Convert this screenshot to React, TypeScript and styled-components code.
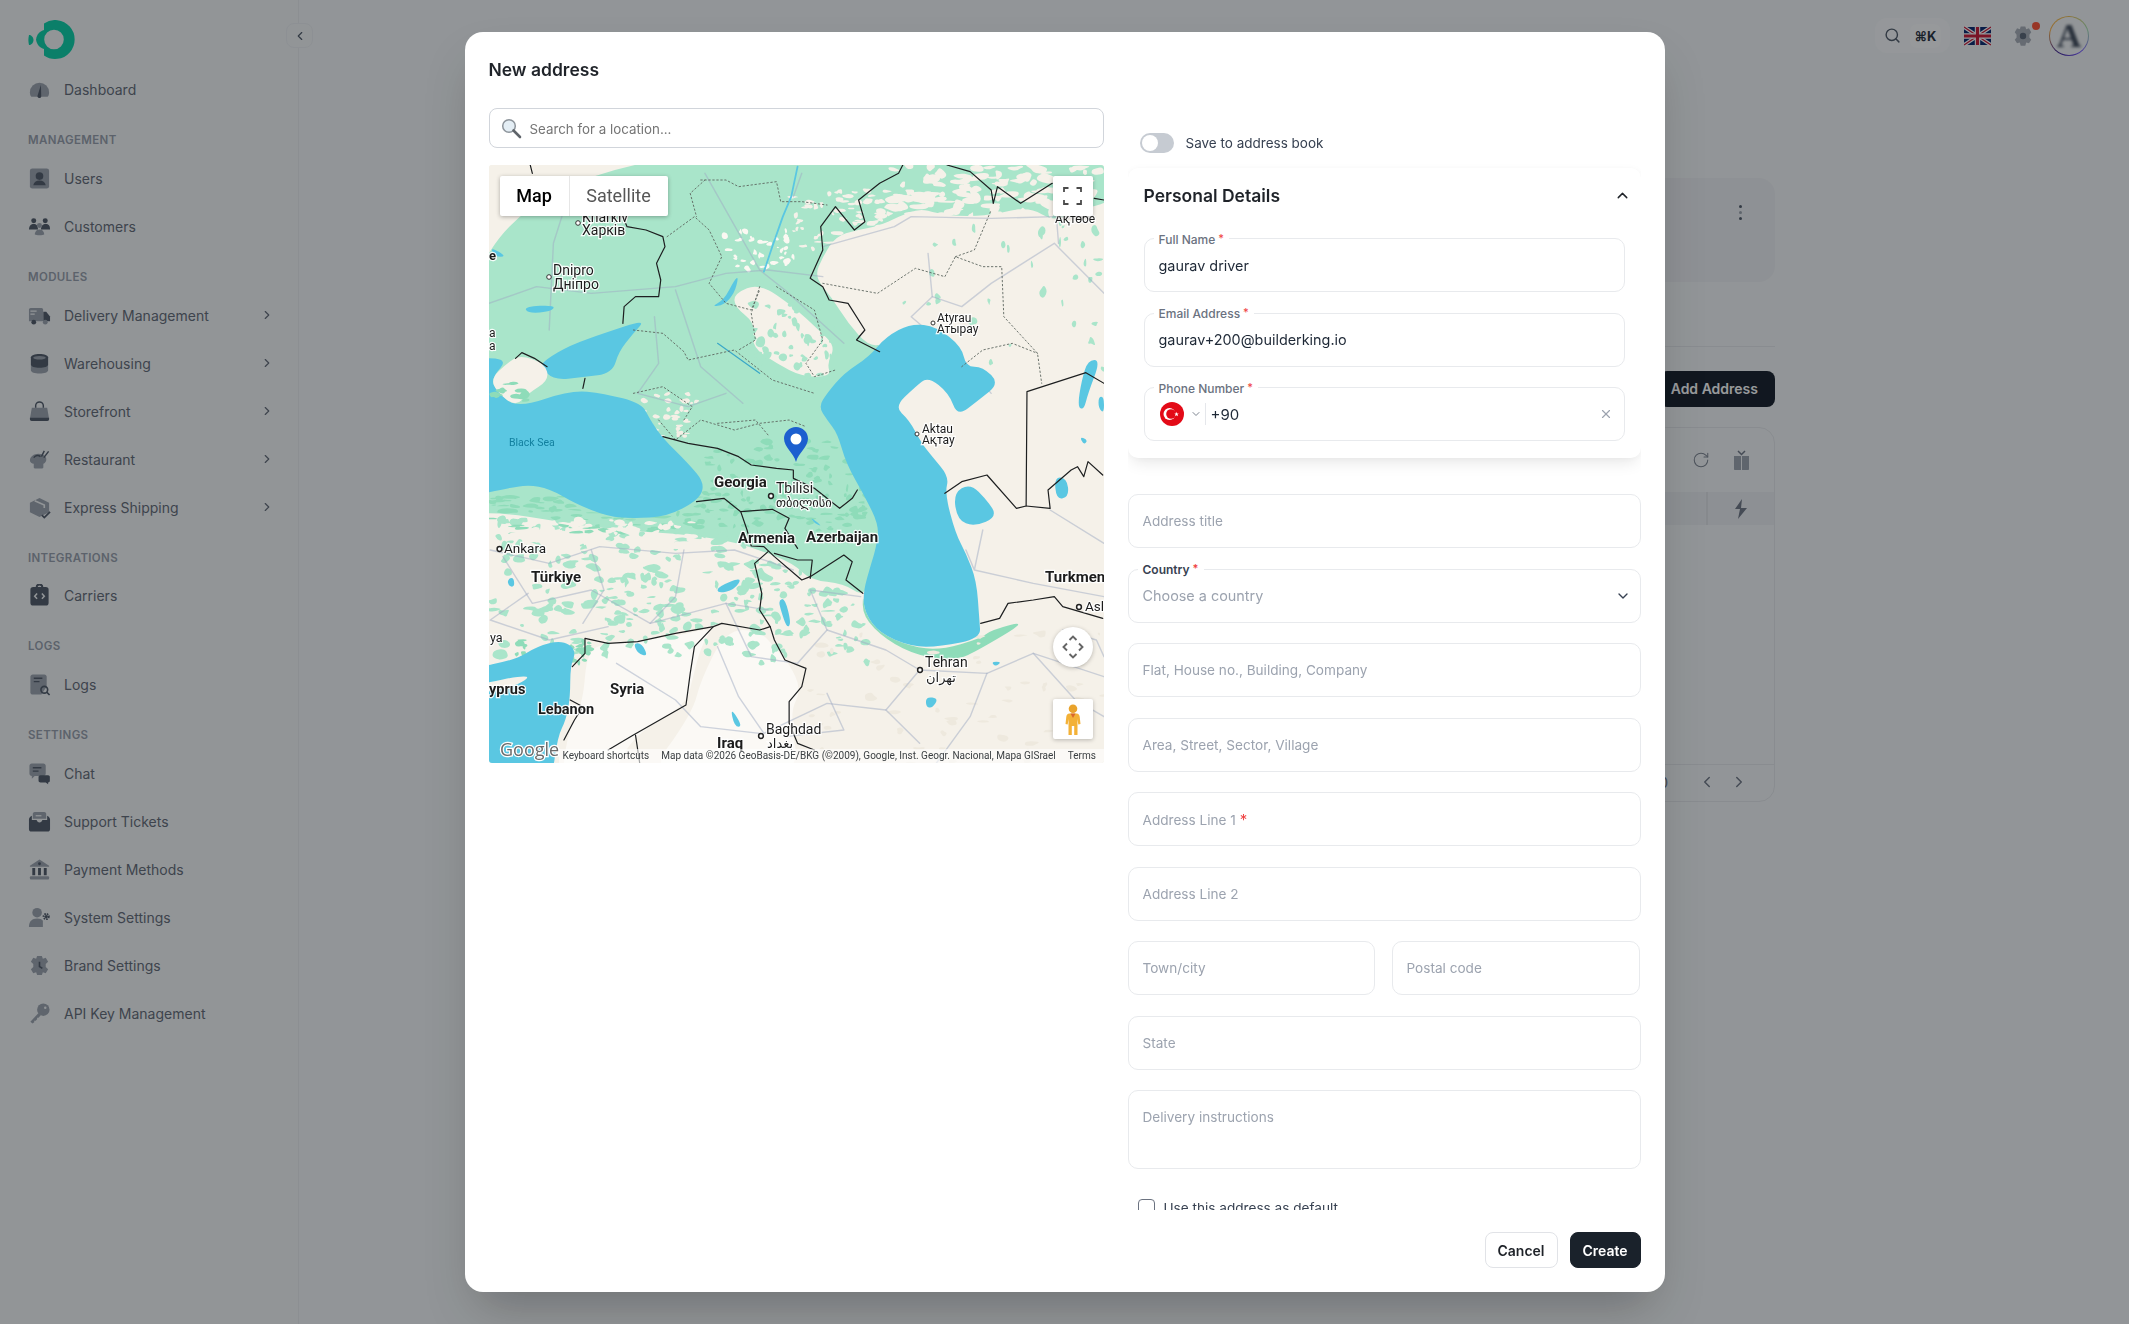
import React from 'react';
import styled, { createGlobalStyle } from 'styled-components';
import { ChevronDown, ChevronLeft, ChevronRight, ChevronUp, RotateCw, Search, X } from 'lucide-react';

const GlobalStyle = createGlobalStyle`
  html, body { margin: 0; padding: 0; height: 100%; overflow: hidden; }
  body { font-family: Inter, "Noto Sans", sans-serif; background: #f5f7f8; color: #1f2937; }
  * { box-sizing: border-box; }
`;

const D = '#4b5563';
const L = '#9aa1ab';

/* ---------- page behind the dialog ---------- */
const Page = styled.div`
  display: flex;
  width: 100%;
  height: 100vh;
`;
const Sidebar = styled.aside`
  position: relative;
  flex: 0 0 299px;
  border-right: 1px solid #e9ebee;
  background: #f4f6f7;
  padding: 20px 0 0 28px;
`;
const LogoWrap = styled.div`
  height: 45.5px;
`;
const LogoSvg = styled.svg`
  display: block;
  width: 48px;
  height: 40px;
`;
const CollapseButton = styled.button`
  position: absolute;
  top: 23px;
  right: -15px;
  width: 27px;
  height: 25px;
  display: flex;
  align-items: center;
  justify-content: center;
  padding: 0;
  border: 1px solid #eceef0;
  border-radius: 8px;
  background: #f4f6f7;
  color: #4b5563;
`;
const SectionLabel = styled.div`
  padding-top: 18.5px;
  height: 40.8px;
  font-size: 11.5px;
  line-height: 16px;
  font-weight: 600;
  letter-spacing: 0.35px;
  text-transform: uppercase;
  color: #959ca8;
`;
const NavItem = styled.div`
  display: flex;
  align-items: center;
  height: 48px;
  width: 246px;
  font-size: 14px;
  color: #5f6672;
`;
const NavText = styled.span`
  flex: 1;
  margin-left: 13px;
`;
const NavChevron = styled(ChevronRight)`
  color: #5f6672;
`;
const IconBox = styled.svg`
  flex: 0 0 auto;
  width: 23px;
  height: 23px;
`;
const Main = styled.main`
  flex: 1;
  min-width: 0;
  display: flex;
  flex-direction: column;
`;
const TopBar = styled.header`
  height: 72px;
  padding: 16px 40px 0 0;
  display: flex;
  align-items: flex-start;
  justify-content: flex-end;
`;
const SearchPill = styled.div`
  width: 75px;
  height: 35px;
  margin-top: 2px;
  border-radius: 12px;
  background: #f9fafb;
  display: flex;
  align-items: center;
  padding-left: 9px;
  color: #4b5563;
`;
const KeyHint = styled.span`
  margin-left: 9px;
  width: 31px;
  height: 24px;
  border-radius: 7px;
  background: #fdfdfd;
  font-size: 13px;
  font-weight: 700;
  line-height: 24px;
  text-align: center;
  color: #1f2937;
`;
const UkFlag = styled.svg`
  width: 27px;
  height: 20px;
  margin: 10px 0 0 14px;
`;
const GearWrap = styled.div`
  position: relative;
  width: 22px;
  height: 22px;
  margin: 9px 0 0 21px;
`;
const RedDot = styled.span`
  position: absolute;
  top: -3px;
  right: -6px;
  width: 8px;
  height: 8px;
  border-radius: 50%;
  background: #ff4d2e;
`;
const AvatarRing = styled.div`
  width: 40px;
  height: 40px;
  margin-left: 15px;
  padding: 1px;
  border-radius: 50%;
  background: conic-gradient(#e9b949, #a3e0b0, #7c5cff, #3b1d8f, #ffb347, #e9b949);
`;
const AvatarInner = styled.div`
  width: 100%;
  height: 100%;
  border-radius: 50%;
  background: #f5f7f8;
  overflow: hidden;
  display: flex;
  align-items: center;
  justify-content: center;
  font-family: "Liberation Serif", serif;
  font-weight: 700;
  font-size: 34px;
  line-height: 38px;
  color: #374151;
`;
const AvatarLetter = styled.span`
  filter: blur(1.4px);
`;
const Content = styled.div`
  width: 1122px;
  margin: 0 auto;
  padding-top: 106px;
  display: flex;
  flex-direction: column;
`;
const SummaryCard = styled.div`
  height: 104px;
  border-radius: 16px;
  background: #eeeff2;
  display: flex;
  justify-content: flex-end;
  padding: 27px 27px 0 0;
  color: #374151;
`;
const MoreDots = styled.div`
  display: flex;
  flex-direction: column;
  gap: 3px;
  margin-right: 6px;
  & > i {
    width: 3px;
    height: 3px;
    border-radius: 50%;
    background: #4b5563;
  }
  & > i:nth-child(2) {
    background: #9aa1ab;
  }
`;
const TabLine = styled.div`
  margin-top: 64px;
  height: 1px;
  background: #e4e6e9;
`;
const AddButton = styled.div`
  align-self: flex-end;
  margin-top: 24px;
  height: 36px;
  padding: 0 17px 0 12px;
  border-radius: 8px;
  background: #0f1722;
  color: #fff;
  font-size: 14px;
  font-weight: 600;
  line-height: 36px;
`;
const TableCard = styled.div`
  margin-top: 20px;
  height: 375px;
  border: 1px solid #e4e6e9;
  border-radius: 16px;
  display: flex;
  flex-direction: column;
`;
const TableTools = styled.div`
  height: 64px;
  display: flex;
  align-items: center;
  justify-content: flex-end;
  gap: 23px;
  padding-right: 24px;
  color: #7b828e;
`;
const TableRow = styled.div`
  height: 33px;
  background: #eceef1;
  display: flex;
  align-items: center;
  justify-content: flex-end;
  padding-right: 25px;
`;
const RowDivider = styled.span`
  width: 2px;
  height: 33px;
  background: #dfe1e5;
  margin-right: 25px;
`;
const TableBody = styled.div`
  flex: 1;
`;
const TableFooter = styled.div`
  height: 37px;
  border-top: 1px solid #e4e6e9;
  padding-bottom: 2px;
  display: flex;
  align-items: center;
  justify-content: flex-end;
  gap: 14px;
  padding-right: 26px;
  color: #6b7280;
  font-size: 14px;
`;
const FooterCount = styled.span`
  margin-right: 16px;
`;

/* ---------- dialog ---------- */
const Backdrop = styled.div`
  position: fixed;
  inset: 0;
  background: rgba(20, 25, 30, 0.44);
  backdrop-filter: blur(0.5px);
  display: flex;
  align-items: center;
  justify-content: center;
`;
const Modal = styled.div`
  width: 1200px;
  height: 1260px;
  background: #fff;
  border-radius: 18px;
  padding: 24px;
  display: flex;
  flex-direction: column;
  box-shadow: 0 25px 50px -12px rgba(0, 0, 0, 0.25);
`;
const ModalTitle = styled.h2`
  margin: 1px 0 25px;
  font-size: 17.5px;
  line-height: 26px;
  font-weight: 600;
  color: #1f2329;
`;
const ModalBody = styled.div`
  flex: 1;
  min-height: 0;
  display: grid;
  grid-template-columns: 615px 513px;
  column-gap: 24px;
`;
const LeftColumn = styled.div`
  display: flex;
  flex-direction: column;
  gap: 17px;
`;
const LocationSearch = styled.div`
  height: 40px;
  border: 1px solid #d1d5db;
  border-radius: 8px;
  display: flex;
  align-items: center;
  padding: 1px 0 0 11px;
  gap: 8px;
  font-size: 13.33px;
  color: #757575;
`;
const GlassSvg = styled.svg`
  width: 21px;
  height: 21px;
`;
const RightColumn = styled.div`
  overflow: hidden;
  display: flex;
  flex-direction: column;
`;
const SaveRow = styled.div`
  margin: 25px 0 0 12px;
  height: 20px;
  display: flex;
  align-items: center;
  gap: 12px;
  font-size: 13.5px;
  color: #374151;
`;
const Toggle = styled.span`
  width: 34px;
  height: 20px;
  padding: 2px;
  border-radius: 10px;
  background: #c6cbd2;
  display: block;
`;
const ToggleKnob = styled.span`
  display: block;
  width: 16px;
  height: 16px;
  border-radius: 50%;
  background: #fff;
`;
const DetailsCard = styled.section`
  margin-top: 15px;
  height: 290px;
  flex: 0 0 auto;
  border-radius: 10px;
  padding: 16px;
  background: #fff;
  box-shadow: 0 8px 16px -4px rgba(0, 0, 0, 0.1), 0 0 6px rgba(0, 0, 0, 0.03);
`;
const CardHead = styled.div`
  height: 24px;
  margin: -1px 0 31.2px;
  display: flex;
  align-items: center;
  justify-content: space-between;
  font-size: 17.5px;
  font-weight: 600;
  color: #1f2329;
`;
const CardChevron = styled(ChevronUp)`
  margin-right: -6px;
`;
const CardFields = styled.div`
  display: flex;
  flex-direction: column;
  gap: 20.5px;
`;
const FieldList = styled.div`
  margin-top: 36px;
  display: flex;
  flex-direction: column;
  gap: 20.5px;
  flex: 0 0 auto;
`;
const Field = styled.div<{ $tall?: boolean }>`
  position: relative;
  flex: 1;
  min-height: ${(p) => (p.$tall ? '79px' : '54px')};
  border: 1px solid #e8eaed;
  border-radius: 10px;
  padding: ${(p) => (p.$tall ? '18px 14px 0' : '0 14px')};
  display: flex;
  align-items: ${(p) => (p.$tall ? 'flex-start' : 'center')};
  font-size: 14px;
`;
const FloatLabel = styled.label<{ $strong?: boolean }>`
  position: absolute;
  top: -9.5px;
  left: 9px;
  padding: 0 5px;
  background: #fff;
  font-size: 12px;
  line-height: 16px;
  font-weight: ${(p) => (p.$strong ? 600 : 500)};
  color: ${(p) => (p.$strong ? '#374151' : '#6b7280')};
`;
const Star = styled.span`
  color: #ef4444;
  font-size: 11px;
  vertical-align: 2px;
  margin-left: 3px;
`;
const Value = styled.span`
  font-size: 14.4px;
  color: #1f2937;
`;
const PhoneValue = styled(Value)`
  margin-left: 1px;
  font-size: 15px;
`;
const Placeholder = styled.span<{ $large?: boolean }>`
  font-size: ${(p) => (p.$large ? '14.4px' : '13.6px')};
  color: #9ca3af;
`;
const RedStar = styled.span`
  margin-left: 4px;
  font-size: 15px;
  color: #ef4444;
`;
const FieldRow = styled.div`
  display: grid;
  grid-template-columns: 247px 248px;
  column-gap: 17px;
`;
const TrailingIcon = styled.span`
  margin-left: auto;
  margin-right: -5px;
  display: flex;
  color: #374151;
`;
const PhoneFlag = styled.svg`
  width: 24px;
  height: 24px;
  margin-left: 1px;
`;
const PhoneChevron = styled(ChevronDown)`
  margin-left: 6px;
  color: #7b828e;
`;
const PhoneDivider = styled.span`
  width: 1px;
  height: 22px;
  margin: 0 4px 0 3px;
  background: #e5e7eb;
`;
const ClearIcon = styled.span`
  margin-left: auto;
  margin-right: -3px;
  display: flex;
  color: #9ca3af;
`;
const DefaultRow = styled.div`
  margin: 30px 0 0 10px;
  display: flex;
  align-items: center;
  gap: 9px;
  font-size: 13.6px;
  color: #374151;
  flex: 0 0 auto;
`;
const CheckBox = styled.span`
  width: 17px;
  height: 17px;
  border: 1.5px solid #6b7280;
  border-radius: 4px;
`;
const ModalFooter = styled.div`
  margin-top: 22px;
  display: flex;
  justify-content: flex-end;
  gap: 12px;
`;
const ActionButton = styled.button<{ $primary?: boolean }>`
  height: 36px;
  width: ${(p) => (p.$primary ? '71px' : '73px')};
  padding: 0;
  border: 1px solid ${(p) => (p.$primary ? '#1a222b' : '#e1e3e7')};
  border-radius: 8px;
  background: ${(p) => (p.$primary ? '#1a222b' : '#fff')};
  color: ${(p) => (p.$primary ? '#fff' : '#1f2329')};
  font-family: Inter, sans-serif;
  font-size: 14px;
  font-weight: 600;
`;

/* ---------- map ---------- */
const MapFrame = styled.div`
  position: relative;
  width: 615px;
  height: 598px;
  overflow: hidden;
  border-radius: 3px;
  background: #f5f1e9;
`;
const MapShapes = styled.svg`
  position: absolute;
  inset: 0;
  width: 100%;
  height: 100%;
  & * {
    vector-effect: non-scaling-stroke;
    stroke-linejoin: round;
    stroke-linecap: round;
  }
`;
const MapLabels = styled.svg`
  position: absolute;
  inset: 0;
  width: 100%;
  height: 100%;
`;
const Place = styled.text<{ $size?: number; $bold?: boolean; $tone?: string }>`
  font-family: Roboto, "DejaVu Sans", sans-serif;
  font-size: ${(p) => p.$size ?? 13}px;
  font-weight: ${(p) => (p.$bold ? 700 : 400)};
  fill: ${(p) => p.$tone ?? '#1c1c1c'};
  stroke: ${(p) => (p.$tone ? 'none' : 'rgba(255,255,255,.9)')};
  stroke-width: 2.4px;
  paint-order: stroke;
`;
const GoogleMark = styled.text`
  font-family: "Open Sans", Roboto, sans-serif;
  font-size: 18px;
  font-weight: 500;
  fill: #6b6b6b;
  stroke: #fff;
  stroke-width: 2.5px;
  paint-order: stroke;
`;
const MapType = styled.div`
  position: absolute;
  top: 11px;
  left: 11px;
  height: 40px;
  display: flex;
  background: #fff;
  border-radius: 2px;
  box-shadow: 0 1px 4px rgba(0, 0, 0, 0.3);
  font-family: Roboto, sans-serif;
  font-size: 18px;
  line-height: 40px;
`;
const MapTypeTab = styled.span<{ $active?: boolean }>`
  width: ${(p) => (p.$active ? '69px' : '99px')};
  text-align: center;
  color: ${(p) => (p.$active ? '#000' : '#565656')};
  font-weight: ${(p) => (p.$active ? 500 : 400)};
  border-left: ${(p) => (p.$active ? 'none' : '1px solid #e6e6e6')};
`;
const MapButton = styled.div<{ $top: number; $round?: boolean }>`
  position: absolute;
  top: ${(p) => p.$top}px;
  right: 11px;
  width: 40px;
  height: 40px;
  display: flex;
  align-items: center;
  justify-content: center;
  background: #fff;
  border-radius: ${(p) => (p.$round ? '50%' : '2px')};
  box-shadow: 0 1px 4px rgba(0, 0, 0, 0.25);
`;
const MapCredits = styled.div`
  position: absolute;
  right: 0;
  bottom: 0;
  left: 70px;
  height: 14px;
  display: flex;
  gap: 12px;
  padding: 0 0 0 4px;
  background: rgba(255, 255, 255, 0.6);
  font-family: Roboto, sans-serif;
  font-size: 10px;
  line-height: 14px;
  color: #3c4043;
`;

function smooth(d: string) {
  return d
    .split('M')
    .filter((s) => s.trim())
    .map((seg) => {
      const n = (seg.match(/-?\d+(\.\d+)?/g) || []).map(Number);
      const pts: number[][] = [];
      for (let i = 0; i + 1 < n.length; i += 2) pts.push([n[i], n[i + 1]]);
      const mid = (a: number[], b: number[]) => `${(a[0] + b[0]) / 2} ${(a[1] + b[1]) / 2}`;
      let out = `M${mid(pts[0], pts[1])}`;
      for (let i = 1; i <= pts.length; i++) {
        const p = pts[i % pts.length];
        const q = pts[(i + 1) % pts.length];
        out += `Q${p[0]} ${p[1]} ${mid(p, q)}`;
      }
      return `${out}Z`;
    })
    .join('');
}

function blobs(seed: number, n: number, box: number[], size: number[]) {
  let s = seed * 9973;
  const r = () => {
    s = (s * 16807) % 2147483647;
    return s / 2147483647;
  };
  let d = '';
  for (let i = 0; i < n; i++) {
    const cx = box[0] + r() * (box[2] - box[0]);
    const cy = box[1] + r() * (box[3] - box[1]);
    const w = size[0] * (0.35 + r());
    const h = size[1] * (0.35 + r());
    const rot = r() * 6.28;
    d += 'M';
    for (let k = 0; k < 7; k++) {
      const a = (k / 7) * 6.28 + rot;
      const q = 0.45 + r() * 0.9;
      d += `${(cx + Math.cos(a) * w * q).toFixed(0)} ${(cy + Math.sin(a) * h * q).toFixed(0)} `;
    }
    d += 'Z';
  }
  return smooth(d);
}

const LAND = '#f5f1e9';
const GREEN = '#a9e5ca';
const DEEP = '#8edcb9';
const WATER = '#5ac7e2';
const ROAD = 'rgba(160,172,196,.5)';

const greenMain = smooth(
  'M10 360 1560 360 1560 505 1460 540 1400 575 1340 530 1250 555 1180 560 1120 550 1080 535 1030 560 980 590 930 600 880 620 850 680 830 740 870 800 910 880 960 950 1000 940 1000 1420 1000 1500 985 1550 970 1640 945 1700 900 1660 820 1650 780 1600 700 1560 620 1530 500 1510 350 1500 200 1470 100 1450 10 1450Z',
);
const wedge = smooth('M640 790 700 760 780 830 840 900 880 950 860 1000 870 1040 800 1040 740 1000 680 950 690 880 640 830Z');
const iranStrip = smooth(
  'M945 1690 945 1760 1000 1830 1080 1880 1170 1890 1220 1860 1340 1770 1250 1800 1225 1825 1130 1860 1060 1850 985 1810 950 1750Z',
);
const desert = smooth(
  'M290 1860 340 1840 500 1820 590 1790 560 1850 540 1950 525 2025 400 2115 340 2260 225 2260 250 2080 280 2020Z M620 1800 700 1800 740 1860 770 1900 800 1980 770 2050 800 2260 420 2260 540 2050 560 1950Z',
);
const caspian =
  'M1060 880 1120 890 1180 950 1190 1010 1230 1010 1270 1060 1220 1110 1170 1160 1150 1090 1100 1040 1070 1070 1020 1130 1055 1170 1085 1240 1110 1280 1150 1340 1140 1390 1165 1510 1190 1570 1215 1650 1222 1770 1225 1825 1130 1850 1060 1850 985 1810 950 1750 945 1690 965 1600 975 1560 985 1490 950 1400 905 1300 885 1210 860 1170 840 1130 860 1090 900 1030 960 980 1000 920Z';
const blackSea =
  'M10 985 105 985 62 1045 75 1085 125 1135 250 1080 330 1090 420 1120 440 1170 470 1225 530 1300 570 1360 555 1410 480 1460 400 1465 340 1460 260 1420 200 1375 150 1365 100 1375 10 1400Z';
const azov = 'M190 990 250 945 330 910 430 868 400 910 365 965 350 1030 280 1042 210 1050 180 1010Z';
const med = 'M10 1915 120 1890 170 1850 230 1830 265 1860 250 1910 250 2000 240 2070 220 2120 205 2260 10 2260Z';
const crimea = smooth('M62 1045 100 1000 130 975 190 1000 200 1050 150 1090 120 1130 75 1085Z');
const cyprus = smooth('M20 1965 165 1930 120 1970 20 1990Z');
const lakes =
  'M1160 1390 1200 1360 1240 1410 1265 1460 1210 1490 1170 1470Z M600 1670 660 1640 640 1680 600 1690Z M745 1710 760 1705 775 1780 765 1795 750 1740Z M820 1460 850 1490 830 1480Z M100 1650 115 1640 118 1670 105 1670Z M1400 1340 1430 1345 1435 1400 1405 1410Z M1480 990 1510 990 1480 1090 1470 1140 1455 1130 1465 1050Z M1095 2000 1125 2005 1110 2035 1095 2030Z M630 2030 660 2090 640 2090Z M1250 1895 1275 1895 1260 1910Z M60 650 100 680 70 680Z M140 830 215 825 205 845 150 850Z M585 830 615 810 640 750 650 740 640 790 615 825Z M1460 1220 1480 1230 1470 1245Z M400 1840 420 1840 435 1880 410 1870Z M1505 1100 1518 1100 1518 1150 1505 1135Z';
const waters = smooth(`M${[caspian, blackSea, azov, med, lakes].join(' M').replace(/M M/g, 'M').replace(/MM/g, 'M')}`);
const borders = [
  'M375 880 378 830 405 800 460 800 465 750 455 700 475 650 470 620 430 600 385 590 375 560',
  'M985 965 930 930 950 900 910 820 865 810 850 770 820 745 850 660 845 590 880 530 925 600 950 575 935 510 985 460 1030 430 1040 405',
  'M1145 405 1200 425 1250 480 1255 520 1265 470 1320 520 1395 460 M1495 505 1518 510',
  'M155 405 160 430',
  'M1518 1060 1475 1028 1335 1085 1333 1428 1310 1435 1240 1335 1180 1355 1140 1390',
  'M1333 1428 1390 1435 1385 1380 1440 1320 1455 1310 1470 1340 1480 1295 1515 1335',
  'M470 1220 530 1240 600 1255 650 1280 680 1305 740 1315 780 1320 780 1345 830 1375 860 1405 890 1435 920 1405 932 1380',
  'M550 1415 615 1405 655 1445 730 1438 770 1465 760 1495 790 1555',
  'M655 1445 670 1500 680 1548 710 1550 735 1580 800 1650 820 1640 900 1575 920 1595 905 1650 945 1690',
  'M720 1565 688 1600 705 1690 700 1740 725 1790 735 1830 760 1890 810 1915 800 1970 770 2015 770 2080 790 2140 830 2160',
  'M255 1910 285 1870 285 1825 340 1840 410 1835 500 1810 590 1790 610 1780 700 1800 725 1790',
  'M590 1790 545 1850 535 1930 525 2025 400 2115 340 2160',
  'M1225 1780 1270 1765 1290 1720 1350 1710 1400 1700 1420 1730 1515 1765',
  'M250 2010 280 2030 260 2070 235 2130',
  'M735 1570 790 1590 825 1590 820 1645',
  'M405 2115 415 2199',
  'M120 985 135 968 165 985 195 1010 M285 1045 280 1075',
];
const dotted = [
  'M480 620 545 560 580 600 610 680 580 760 620 820 680 840 700 780',
  'M570 450 535 490 550 560',
  'M560 450 620 450 650 470 740 455 750 515 800 515 860 525',
  'M850 760 980 790 1070 715 1140 740 1165 680 1230 710 1275 710 1280 860 1360 970 1370 1060',
  'M1165 680 1210 660 1250 540',
  'M400 900 470 910 520 965 530 990 640 960 730 1050 830 1090',
  'M700 770 680 850 690 930 650 960 M740 770 830 840 850 930 810 1000 830 1040 880 1020',
  'M1180 1010 1230 960 1300 940 1360 970',
  'M400 1090 470 1070 540 1130 520 1170 M460 1170 500 1230 560 1170 640 1200 700 1180 770 1170 810 1190',
  'M600 1180 690 1170 720 1215',
];
const roads = [
  'M57 820 170 770 300 790 500 770 620 730 720 720 850 740',
  'M1100 670 1110 800 1180 830 1250 760 1400 640 1518 790',
  'M230 560 210 640 200 900',
  'M570 430 700 720 760 780 900 940',
  'M800 430 780 500',
  'M850 650 1020 590 1060 560 1250 565 1400 560',
  'M1110 800 1060 860 1190 1000 1250 1090',
  'M1405 560 1410 640',
  'M450 860 460 1000 410 1090 530 1130 620 1090',
  'M660 1120 560 1010 500 780',
  'M60 1560 200 1600 320 1550 500 1570 640 1560 780 1620',
  'M90 1580 160 1720 300 1680 440 1780 620 1720 720 1740',
  'M150 1690 60 1770 200 1830 340 1790',
  'M300 1560 330 1680 280 1780 M520 1560 500 1700 440 1780',
  'M620 1720 680 1880 790 1900 860 1800 1000 1860 1080 1920',
  'M860 1800 820 1680 940 1700',
  'M1080 1920 1000 2040 1080 2140 M1080 1920 1240 1930 1350 1870 1518 1940',
  'M1240 1930 1200 2060 1120 2199 M1350 1870 1450 2010 1518 2060',
  'M360 1900 500 2010 560 2090 700 2110 M600 1850 650 2000 710 2110 860 2020 1000 2040',
  'M760 2120 900 2100 860 1990',
  'M1230 1500 1210 1620 1350 1660 1518 1700 M1390 1440 1518 1540 M1210 1620 1190 1560',
  'M1420 1800 1500 1830 1518 1880 M1100 1570 1000 1590 980 1680',
];

function MapArt() {
  return (
    <MapFrame>
      <MapShapes viewBox="57 405 1461 1794" preserveAspectRatio="none">
        <rect x="57" y="405" width="1461" height="1794" fill={LAND} />
        <path d={desert} fill="#fbf9f5" />
        <path d={greenMain} fill={GREEN} />
        <path d={wedge} fill={LAND} />
        <path d={iranStrip} fill={DEEP} />
        <path d={blobs(11, 110, [1000, 405, 1518, 560], [20, 13])} fill={LAND} />
        <path d={blobs(23, 70, [780, 480, 1000, 660], [11, 9])} fill={LAND} />
        <path d={blobs(37, 40, [610, 600, 780, 720], [9, 8])} fill="#fbf8f2" />
        <path d={blobs(41, 40, [1000, 560, 1518, 1020], [8, 13])} fill={GREEN} />
        <path d={blobs(53, 60, [660, 790, 880, 1040], [9, 12])} fill={GREEN} />
        <path d={blobs(61, 34, [420, 1090, 560, 1220], [9, 7])} fill="#f5efe6" />
        <path d={blobs(71, 230, [57, 1450, 700, 1880], [15, 12])} fill={GREEN} />
        <path d={blobs(83, 100, [660, 1600, 960, 1900], [13, 11])} fill={GREEN} />
        <path d={blobs(89, 130, [560, 1230, 960, 1500], [12, 9])} fill={DEEP} />
        <path d={blobs(97, 90, [57, 1400, 560, 1510], [18, 7])} fill={DEEP} />
        <path d={blobs(99, 70, [57, 1470, 560, 1560], [16, 8])} fill={LAND} />
        <path d={blobs(101, 46, [120, 1830, 300, 1900], [12, 9])} fill={DEEP} />
        <path d={blobs(107, 60, [800, 1800, 1518, 2199], [14, 9])} fill="#eee9de" />
        {roads.map((d) => (
          <path key={d} d={d} fill="none" stroke={ROAD} strokeWidth="1.4" />
        ))}
        <path d={waters} fill={WATER} />
        <path d={crimea} fill={LAND} />
        <path d={blobs(113, 10, [70, 1060, 150, 1120], [16, 10])} fill={DEEP} />
        <path d={cyprus} fill={LAND} />
        <path d="M790 410 775 500 755 560 730 650 710 725" fill="none" stroke={WATER} strokeWidth="1.8" />
        <path d="M600 940 650 985 700 1030" fill="none" stroke="#3aa8c8" strokeWidth="1.2" />
        {dotted.map((d) => (
          <path key={d} d={d} fill="none" stroke="#5d6660" strokeWidth="0.9" strokeDasharray="1.5 2.5" />
        ))}
        {borders.map((d) => (
          <path key={d} d={d} fill="none" stroke="#1d1f20" strokeWidth="1.2" />
        ))}
      </MapShapes>
      <MapLabels viewBox="0 0 615 598">
        <Place x="93" y="57" $size={14}>Kharkiv</Place>
        <Place x="93" y="70" $size={14}>Харків</Place>
        <circle cx="89" cy="58" r="2.3" fill="#fff" stroke="#333" />
        <Place x="64" y="110" $size={14}>Dnipro</Place>
        <Place x="64" y="124" $size={14}>Дніпро</Place>
        <circle cx="60" cy="112" r="2.3" fill="#fff" stroke="#333" />
        <Place x="566" y="58" $size={12}>Ақтөбе</Place>
        <Place x="448" y="157" $size={12}>Atyrau</Place>
        <Place x="448" y="168" $size={12}>Атырау</Place>
        <circle cx="444" cy="158" r="2" fill="#fff" stroke="#333" />
        <Place x="433" y="268" $size={12}>Aktau</Place>
        <Place x="433" y="279" $size={12}>Ақтау</Place>
        <circle cx="428" cy="269" r="2" fill="#fff" stroke="#333" />
        <Place x="0" y="95" $size={13} $bold>e</Place>
        <Place x="0" y="172" $size={12}>a</Place>
        <Place x="0" y="185" $size={12}>a</Place>
        <Place x="20" y="281" $size={10.5} $tone="#12809f">Black Sea</Place>
        <Place x="225" y="322" $size={15} $bold>Georgia</Place>
        <Place x="287" y="328" $size={14}>Tbilisi</Place>
        <Place x="287" y="342" $size={12.5}>თბილისი</Place>
        <circle cx="282" cy="331" r="2.4" fill="#fff" stroke="#222" strokeWidth="1.5" />
        <Place x="249" y="378" $size={15} $bold>Armenia</Place>
        <Place x="317" y="377" $size={15} $bold>Azerbaijan</Place>
        <Place x="15" y="388" $size={13.5}>Ankara</Place>
        <circle cx="10.5" cy="384" r="2.4" fill="#fff" stroke="#222" strokeWidth="1.5" />
        <Place x="42" y="417" $size={15} $bold>Türkiye</Place>
        <Place x="556" y="417" $size={15} $bold>Turkmen</Place>
        <Place x="596" y="446" $size={13.5}>Asl</Place>
        <circle cx="590" cy="442" r="2.4" fill="#fff" stroke="#222" strokeWidth="1.5" />
        <Place x="1" y="477" $size={12.5}>ya</Place>
        <Place x="436" y="502" $size={14}>Tehran</Place>
        <Place x="437" y="517" $size={13}>تهران</Place>
        <circle cx="431" cy="505" r="2.4" fill="#fff" stroke="#222" strokeWidth="1.5" />
        <Place x="0" y="529" $size={14.5} $bold>yprus</Place>
        <Place x="121" y="529" $size={15} $bold>Syria</Place>
        <Place x="49" y="549" $size={14.5} $bold>Lebanon</Place>
        <Place x="277" y="569" $size={14}>Baghdad</Place>
        <Place x="278" y="583" $size={13}>بغداد</Place>
        <circle cx="272" cy="571" r="2.4" fill="#fff" stroke="#222" strokeWidth="1.5" />
        <Place x="228" y="583" $size={15} $bold>Iraq</Place>
        <path d="M307 262c-6.6 0-12 5.2-12 11.6 0 8.6 9.4 14.2 12 23.4 2.600-9.200 12-14.800 12-23.400C319 267.200 313.600 262 307 262z" fill="#1c5fcf" />
        <circle cx="307" cy="274" r="5.500" fill="#fff" />
        <GoogleMark x="11" y="591">Google</GoogleMark>
      </MapLabels>
      <MapType>
        <MapTypeTab $active>Map</MapTypeTab>
        <MapTypeTab>Satellite</MapTypeTab>
      </MapType>
      <MapButton $top={11}>
        <svg width="19" height="18" viewBox="0 0 19 18" fill="none" stroke="#4a4a4a" strokeWidth="1.800">
          <path d="M1 5V1h4.500M13.500 1H18v4M18 13v4h-4.500M5.500 17H1v-4" />
        </svg>
      </MapButton>
      <MapButton $top={462} $round>
        <svg width="22" height="24" viewBox="0 0 22 24" fill="none" stroke="#666" strokeWidth="1.900">
          <path d="M7.500 5 11 1.500 14.500 5M7.500 19l3.500 3.500 3.500-3.500M5 8.500 1.500 12 5 15.500M17 8.500 20.500 12 17 15.500" />
        </svg>
      </MapButton>
      <MapButton $top={534}>
        <svg width="18" height="31" viewBox="0 0 18 31">
          <circle cx="9" cy="4.800" r="4.300" fill="#e9a32c" />
          <path d="M5.500 9.500h7c2 0 3 1.300 3.200 3.200l.8 7.300-2.200.4-.8-5.500V31h-3.300v-9H7.800v9H4.500V15l-.8 5.500-2.200-.4.800-7.400C2.500 10.800 3.500 9.500 5.500 9.500z" fill="#f3b137" />
          <path d="M6.500 9.500h5L9 14z" fill="#d9682b" />
        </svg>
      </MapButton>
      <MapCredits>
        <span>Keyboard shortcuts</span>
        <span>Map data ©2026 GeoBasis-DE/BKG (©2009), Google, Inst. Geogr. Nacional, Mapa GISrael</span>
        <span>Terms</span>
      </MapCredits>
    </MapFrame>
  );
}

/* ---------- sidebar icons ---------- */
const Icon = ({ children }: { children: React.ReactNode }) => <IconBox viewBox="0 0 24 24">{children}</IconBox>;

const icons: Record<string, React.ReactNode> = {
  dashboard: (
    <>
      <path d="M2 15a10 10 0 0 1 20 0c0 2-.5 3.500-1.500 4.500h-17C2.500 18.500 2 17 2 15z" fill={L} />
      <path d="M13.500 7l.3 11.500a2 2 0 1 1-3.700-.5z" fill={D} />
    </>
  ),
  users: (
    <>
      <rect x="2" y="1.500" width="20" height="21" rx="2.500" fill={L} />
      <circle cx="12" cy="9.500" r="4" fill={D} />
      <path d="M5.500 19c.5-3.500 3-5 6.500-5s6 1.500 6.500 5z" fill={D} />
    </>
  ),
  customers: (
    <>
      <circle cx="6" cy="6" r="2.600" fill={D} />
      <circle cx="18" cy="6" r="2.600" fill={D} />
      <path d="M1 15c.5-4 2-5.500 5-5.500S10 11 10.500 15zM13.500 15c.5-4 2-5.500 5-5.500S23 11 23 15z" fill={D} />
      <circle cx="12" cy="11" r="2.600" fill={L} />
      <path d="M7 20c.5-3.500 2-5 5-5s4.500 1.500 5 5c-1.500 1.500-8.500 1.500-10 0z" fill={L} />
    </>
  ),
  delivery: (
    <>
      <path d="M1 6c0-1 .8-1.800 1.800-1.800H14c1 0 1.800.8 1.800 1.800v12H1z" fill={L} />
      <path d="M16 8h3l4 5v5h-7z" fill={D} />
      <circle cx="6" cy="19" r="2.500" fill={D} />
      <circle cx="18" cy="19" r="2.500" fill={L} />
      <path d="M2.500 7.500H9M2.500 10.500H7" stroke="#f4f6f7" strokeWidth="1.200" />
    </>
  ),
  warehouse: (
    <>
      <path d="M3 13v6c0 2 4 3.500 9 3.500s9-1.500 9-3.500v-6z" fill={L} />
      <path d="M3 5.500C3 3.500 7 2 12 2s9 1.500 9 3.500V13c0 2-4 3.500-9 3.500S3 15 3 13z" fill={D} />
      <ellipse cx="12" cy="6" rx="6.500" ry="1.800" fill={L} />
    </>
  ),
  store: (
    <>
      <path d="M4 8h16l2 11.500H2z" fill={L} />
      <path d="M8 8V6a4 4 0 0 1 8 0v2" fill="none" stroke={D} strokeWidth="1.500" />
      <path d="M2 18.500h20v1.700c0 1-.7 1.800-1.800 1.800H3.800C2.700 22 2 21.200 2 20.200z" fill={D} />
    </>
  ),
  restaurant: (
    <>
      <path d="M2 13c0-4 4-7 9-7s9 3 8 7c-.5 2-2 3-3 3.500V20c0 1-1 1.500-2 1.500H8c-1 0-2-.5-2-1.500v-3.500C4 16 2 15 2 13z" fill={L} />
      <path d="M14 9l3-6M16.500 10l5-6.500M6 10c2-2.500 5-3 7-1" fill="none" stroke={D} strokeWidth="1.500" />
    </>
  ),
  express: (
    <>
      <path d="M2 7l10-5 10 5v10l-10 5-10-5z" fill={L} />
      <path d="M7 5l10 4.500v3" fill="none" stroke="#f4f6f7" strokeWidth="1.700" />
      <path d="M14.500 20l2.500 2.500 6-6" fill="none" stroke={D} strokeWidth="1.800" />
    </>
  ),
  carriers: (
    <>
      <path d="M9 3.500a3 3 0 0 1 6 0" fill="none" stroke={D} strokeWidth="2" />
      <rect x="2.500" y="3" width="19" height="19.500" rx="3" fill={D} />
      <path d="M9.500 10 7 12.700l2.500 2.600M14.500 10l2.500 2.700-2.500 2.600" fill="none" stroke="#f4f6f7" strokeWidth="1.600" />
    </>
  ),
  logs: (
    <>
      <path d="M5 1.500h12c1.500 0 2.500 1 2.500 2.500v10L14 22.500H5c-1.500 0-2.500-1-2.500-2.500V4C2.500 2.500 3.500 1.500 5 1.500z" fill={L} />
      <path d="M6 5.500h9M6 9h6" stroke={D} strokeWidth="1.500" />
      <circle cx="17" cy="17.500" r="3.500" fill="none" stroke={D} strokeWidth="1.700" />
      <path d="M19.500 20l3 3" stroke={D} strokeWidth="1.700" />
    </>
  ),
  chat: (
    <>
      <path d="M4 1.500h12c1.500 0 2.500 1 2.500 2.500v8c0 1.500-1 2.500-2.500 2.500H7l-3 3v-3c-1.500 0-2.500-1-2.500-2.500V4C1.500 2.500 2.500 1.500 4 1.500z" fill={L} />
      <path d="M5 6h9M5 9.500h6" stroke={D} strokeWidth="1.500" />
      <path d="M11 15.500c0-1 1-1.800 2-1.800h8c1 0 1.800.8 1.800 1.800v4c0 1-.8 1.800-1.800 1.800v2l-2.500-2H13c-1 0-2-.8-2-1.800z" fill={D} />
    </>
  ),
  support: (
    <>
      <path d="M5 9V4c0-1 1-2 2-2h10c1 0 2 1 2 2v5z" fill={L} />
      <path d="M1 10c0-1.500 1-3 3-4v4.500h5c.5 1.800 1.500 2.500 3 2.500s2.500-.7 3-2.500h5V6c2 1 3 2.500 3 4v10c0 1.500-1 2.500-2.500 2.500h-17C2 22.500 1 21.500 1 20z" fill={D} />
      <path d="M8 6h6" stroke="#f4f6f7" strokeWidth="1.300" />
    </>
  ),
  payment: (
    <>
      <path d="M12 1.500 22 8v1H2V8z" fill={L} />
      <circle cx="12" cy="6" r="1.500" fill={D} />
      <rect x="2" y="19" width="20" height="3.500" rx="1" fill={L} />
      <path d="M4.500 10.500h3v7.500h-3zM10.500 10.500h3v7.500h-3zM16.500 10.500h3v7.500h-3z" fill={D} />
    </>
  ),
  system: (
    <>
      <circle cx="9.500" cy="7" r="5" fill={L} />
      <path d="M1 22c0-6 3-9 8.500-9 3 0 5 .8 6 2.500V22z" fill={L} />
      <circle cx="19" cy="11" r="2.700" fill="none" stroke={D} strokeWidth="2" strokeDasharray="1.600 1" />
      <circle cx="19" cy="11" r="1.700" fill={D} />
    </>
  ),
  brand: (
    <>
      <path d="M9.500 2h5l1 3 3-1 2.500 4-2.500 2.500v3L21 16l-2.500 4-3-1-1 3h-5l-1-3-3 1L3 16l2.500-2.500v-3L3 8l2.500-4 3 1z" fill={L} />
      <path d="M12 8v5l3 2" fill="none" stroke={D} strokeWidth="1.700" />
    </>
  ),
  api: (
    <>
      <circle cx="16" cy="8" r="6.500" fill={L} />
      <path d="M11 11.500 2.500 20.500l2.200 2 1.800-1.500v-1.500h1.500l1.500-1.500v-1.500h1.500l2.500-3z" fill={L} />
      <circle cx="18" cy="6" r="1.300" fill="#f4f6f7" />
    </>
  ),
};

const sections: { label?: string; items: { text: string; icon: string; more?: boolean }[] }[] = [
  { items: [{ text: 'Dashboard', icon: 'dashboard' }] },
  {
    label: 'Management',
    items: [
      { text: 'Users', icon: 'users' },
      { text: 'Customers', icon: 'customers' },
    ],
  },
  {
    label: 'Modules',
    items: [
      { text: 'Delivery Management', icon: 'delivery', more: true },
      { text: 'Warehousing', icon: 'warehouse', more: true },
      { text: 'Storefront', icon: 'store', more: true },
      { text: 'Restaurant', icon: 'restaurant', more: true },
      { text: 'Express Shipping', icon: 'express', more: true },
    ],
  },
  { label: 'Integrations', items: [{ text: 'Carriers', icon: 'carriers' }] },
  { label: 'Logs', items: [{ text: 'Logs', icon: 'logs' }] },
  {
    label: 'Settings',
    items: [
      { text: 'Chat', icon: 'chat' },
      { text: 'Support Tickets', icon: 'support' },
      { text: 'Payment Methods', icon: 'payment' },
      { text: 'System Settings', icon: 'system' },
      { text: 'Brand Settings', icon: 'brand' },
      { text: 'API Key Management', icon: 'api' },
    ],
  },
];

const outerFields = ['Flat, House no., Building, Company', 'Area, Street, Sector, Village'];

export default function App() {
  return (
    <>
      <GlobalStyle />
      <Page>
        <Sidebar>
          <LogoWrap>
            <LogoSvg viewBox="0 0 48 40">
              <path
                d="M16 3.500A19.500 19.500 0 1 1 16 35.500ZM26 9.700a9.800 9.800 0 1 0 0 19.600 9.800 9.800 0 0 0 0-19.600Z"
                fill="#05cfa4"
                fillRule="evenodd"
              />
              <path d="M8 19.500C9 14 12 11 16 10v19c-4-1-7-4-8-9.500Z" fill="#05cfa4" />
              <path d="M1 15c2 0 4.500 2 4.500 5s-2.500 5-4.500 5c-.8-3-.8-7 0-10Z" fill="#05cfa4" />
            </LogoSvg>
          </LogoWrap>
          <CollapseButton>
            <ChevronLeft size={14} />
          </CollapseButton>
          {sections.map((s) => (
            <div key={s.label ?? 'top'}>
              {s.label && <SectionLabel>{s.label}</SectionLabel>}
              {s.items.map((it) => (
                <NavItem key={it.text}>
                  <Icon>{icons[it.icon]}</Icon>
                  <NavText>{it.text}</NavText>
                  {it.more && <NavChevron size={14} />}
                </NavItem>
              ))}
            </div>
          ))}
        </Sidebar>
        <Main>
          <TopBar>
            <SearchPill>
              <Search size={17} />
              <KeyHint>⌘K</KeyHint>
            </SearchPill>
            <UkFlag viewBox="0 0 60 40">
              <rect width="60" height="40" fill="#012169" />
              <path d="M0 0l60 40M60 0L0 40" stroke="#fff" strokeWidth="8" />
              <path d="M0 0l60 40M60 0L0 40" stroke="#c8102e" strokeWidth="3" />
              <path d="M30 0v40M0 20h60" stroke="#fff" strokeWidth="12" />
              <path d="M30 0v40M0 20h60" stroke="#c8102e" strokeWidth="7" />
            </UkFlag>
            <GearWrap>
              <svg width="22" height="22" viewBox="0 0 24 24">
                <path d="M9.500 1.500h5l1 3 3-1 2.500 4.500-2 2.500v3l2 2.500-2.500 4-3-1-1 3.500h-5l-1-3.500-3 1L3 16l2-2.500v-3L3 8l2.500-4.500 3 1z" fill="#a6acb5" />
                <circle cx="12" cy="12" r="3.500" fill="#566070" />
              </svg>
              <RedDot />
            </GearWrap>
            <AvatarRing>
              <AvatarInner>
                <AvatarLetter>A</AvatarLetter>
              </AvatarInner>
            </AvatarRing>
          </TopBar>
          <Content>
            <SummaryCard>
              <MoreDots>
                <i />
                <i />
                <i />
              </MoreDots>
            </SummaryCard>
            <TabLine />
            <AddButton>Add Address</AddButton>
            <TableCard>
              <TableTools>
                <RotateCw size={18} strokeWidth={1.4} />
                <svg width="17" height="20" viewBox="0 0 17 20" fill="#9aa1ab">
                  <path d="M1 6h7v14H2c-.6 0-1-.4-1-1zM9 6h7v13c0 .6-.4 1-1 1H9z" />
                  <path d="M5 1l3.500 3.500L12 1" fill="none" stroke="#6b7280" strokeWidth="1.500" />
                </svg>
              </TableTools>
              <TableRow>
                <RowDivider />
                <svg width="16" height="20" viewBox="0 0 16 20">
                  <path d="M9 0 2 10h5L5 20l9-11H8z" fill="#6b7280" />
                </svg>
              </TableRow>
              <TableBody />
              <TableFooter>
                <FooterCount>0 of 0</FooterCount>
                <ChevronLeft size={18} />
                <ChevronRight size={18} />
              </TableFooter>
            </TableCard>
          </Content>
        </Main>
        <Backdrop>
          <Modal>
            <ModalTitle>New address</ModalTitle>
            <ModalBody>
              <LeftColumn>
                <LocationSearch>
                  <GlassSvg viewBox="0 0 21 21">
                    <circle cx="8" cy="8" r="6.300" fill="#e4eef5" stroke="#8d949b" strokeWidth="1.500" />
                    <path d="M12.500 12.500l6.500 6.500" stroke="#5f646a" strokeWidth="2.600" strokeLinecap="round" />
                  </GlassSvg>
                  Search for a location...
                </LocationSearch>
                <MapArt />
              </LeftColumn>
              <RightColumn>
                <SaveRow>
                  <Toggle>
                    <ToggleKnob />
                  </Toggle>
                  Save to address book
                </SaveRow>
                <DetailsCard>
                  <CardHead>
                    Personal Details
                    <CardChevron size={17} />
                  </CardHead>
                  <CardFields>
                    <Field>
                      <FloatLabel>Full Name<Star>*</Star></FloatLabel>
                      <Value>gaurav driver</Value>
                    </Field>
                    <Field>
                      <FloatLabel>Email Address<Star>*</Star></FloatLabel>
                      <Value>gaurav+200@builderking.io</Value>
                    </Field>
                    <Field>
                      <FloatLabel>Phone Number<Star>*</Star></FloatLabel>
                      <PhoneFlag viewBox="0 0 24 24">
                        <circle cx="12" cy="12" r="12" fill="#e30a17" />
                        <circle cx="9.500" cy="12" r="6" fill="#fff" />
                        <circle cx="11" cy="12" r="4.800" fill="#e30a17" />
                        <path d="M16.500 9.800l.6 1.600 1.700.1-1.300 1 .5 1.700-1.500-1-1.400 1 .5-1.700-1.300-1 1.700-.1z" fill="#fff" />
                      </PhoneFlag>
                      <PhoneChevron size={12} />
                      <PhoneDivider />
                      <PhoneValue>+90</PhoneValue>
                      <ClearIcon>
                        <X size={14} />
                      </ClearIcon>
                    </Field>
                  </CardFields>
                </DetailsCard>
                <FieldList>
                  <Field>
                    <Placeholder>Address title</Placeholder>
                  </Field>
                  <Field>
                    <FloatLabel $strong>Country<Star>*</Star></FloatLabel>
                    <Placeholder $large>Choose a country</Placeholder>
                    <TrailingIcon>
                      <ChevronDown size={16} />
                    </TrailingIcon>
                  </Field>
                  {outerFields.map((t) => (
                    <Field key={t}>
                      <Placeholder>{t}</Placeholder>
                    </Field>
                  ))}
                  <Field>
                    <Placeholder>Address Line 1<RedStar>*</RedStar></Placeholder>
                  </Field>
                  <Field>
                    <Placeholder>Address Line 2</Placeholder>
                  </Field>
                  <FieldRow>
                    <Field>
                      <Placeholder>Town/city</Placeholder>
                    </Field>
                    <Field>
                      <Placeholder>Postal code</Placeholder>
                    </Field>
                  </FieldRow>
                  <Field>
                    <Placeholder>State</Placeholder>
                  </Field>
                  <Field $tall>
                    <Placeholder>Delivery instructions</Placeholder>
                  </Field>
                </FieldList>
                <DefaultRow>
                  <CheckBox />
                  Use this address as default
                </DefaultRow>
              </RightColumn>
            </ModalBody>
            <ModalFooter>
              <ActionButton>Cancel</ActionButton>
              <ActionButton $primary>Create</ActionButton>
            </ModalFooter>
          </Modal>
        </Backdrop>
      </Page>
    </>
  );
}
